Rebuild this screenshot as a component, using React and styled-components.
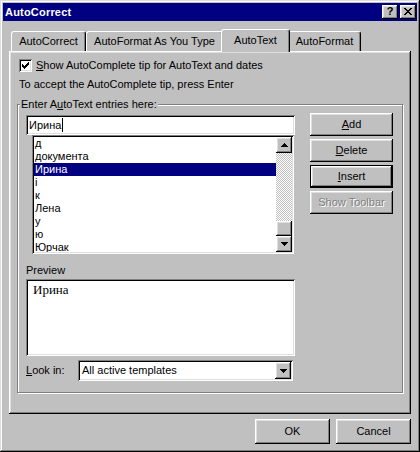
import React from "react";
import styled, { createGlobalStyle, css } from "styled-components";

const GlobalStyle = createGlobalStyle`
  html, body { margin: 0; padding: 0; background: #c0c0c0; }
  body {
    font-family: "Liberation Sans", Arial, sans-serif;
    font-size: 11px;
    color: #000;
  }
  * { box-sizing: border-box; }
  u { text-decoration: underline; text-underline-offset: 1px; }
`;

const raised = css`
  box-shadow: inset -1px -1px #000, inset 1px 1px #fff, inset -2px -2px #808080,
    inset 2px 2px #dfdfdf;
`;
const sunken = css`
  box-shadow: inset 1px 1px #808080, inset -1px -1px #fff, inset 2px 2px #000,
    inset -2px -2px #dfdfdf;
`;

const Window = styled.div`
  width: 420px;
  height: 452px;
  background: #c0c0c0;
  padding: 3px;
  display: flex;
  flex-direction: column;
  box-shadow: inset -1px -1px #000, inset 1px 1px #dfdfdf, inset -2px -2px #808080,
    inset 2px 2px #fff;
`;

const TitleBar = styled.div`
  height: 18px;
  background: #000080;
  display: flex;
  align-items: center;
  justify-content: space-between;
  padding: 0 1px 0 2px;
`;

const TitleText = styled.span`
  color: #fff;
  font-weight: bold;
  font-size: 11px;
  letter-spacing: 0.2px;
`;

const TitleButtons = styled.div`
  display: flex;
  gap: 2px;
`;

const TitleButton = styled.div`
  width: 16px;
  height: 14px;
  background: #c0c0c0;
  ${raised};
  display: flex;
  align-items: center;
  justify-content: center;
  font-weight: bold;
  font-size: 11px;
  line-height: 1;
  padding-bottom: 1px;
`;

const Body = styled.div`
  flex: 1;
  display: flex;
  flex-direction: column;
  padding: 8px 6px 5px 6px;
`;

const TabStrip = styled.div`
  height: 22px;
  display: flex;
  align-items: flex-end;
  padding-left: 2px;
  position: relative;
  z-index: 1;
`;

const Tab = styled.div`
  width: ${(p) => p.$w}px;
  height: ${(p) => (p.$active ? 23 : 20)}px;
  margin: ${(p) => (p.$active ? "0 -2px -1px -2px" : "0")};
  background: #c0c0c0;
  border-top: 1px solid #fff;
  border-left: 1px solid #fff;
  border-right: 1px solid #000;
  border-radius: 3px 3px 0 0;
  box-shadow: inset -1px 0 #808080;
  display: flex;
  align-items: flex-start;
  justify-content: center;
  padding-top: ${(p) => (p.$active ? 4 : 3)}px;
  position: relative;
  z-index: ${(p) => (p.$active ? 2 : 1)};
  white-space: nowrap;
`;

const Panel = styled.div`
  height: 363px;
  background: #c0c0c0;
  box-shadow: inset -1px -1px #000, inset 1px 1px #fff, inset -2px -2px #808080,
    inset 2px 2px #dfdfdf;
  padding: 8px 8px 0 8px;
  display: flex;
  flex-direction: column;
`;

const CheckRow = styled.div`
  display: flex;
  align-items: center;
  gap: 4px;
  height: 13px;
  margin-left: 2px;
`;

const CheckBox = styled.div`
  width: 13px;
  height: 13px;
  background: #fff;
  ${sunken};
  display: flex;
  align-items: center;
  justify-content: center;
`;

const Text = styled.span`
  line-height: 13px;
  white-space: nowrap;
  color: ${(p) => (p.$disabled ? "#808080" : "#000")};
  text-shadow: ${(p) => (p.$disabled ? "1px 1px #fff" : "none")};
`;

const InfoText = styled.div`
  line-height: 13px;
  margin: 6px 0 0 2px;
`;

const Group = styled.div`
  margin-top: 13px;
  height: 289px;
  border: 1px solid #808080;
  box-shadow: inset 1px 1px #fff, 1px 1px #fff;
  display: flex;
  flex-direction: column;
  padding: 0 9px 11px 8px;
`;

const Legend = styled.div`
  align-self: flex-start;
  margin: -7px 0 0 -6px;
  padding: 0 1px;
  background: #c0c0c0;
  line-height: 13px;
`;

const GroupGrid = styled.div`
  margin-top: 2px;
  display: grid;
  grid-template-columns: 270px 83px;
  column-gap: 14px;
  flex: 1;
`;

const LeftCol = styled.div`
  padding-top: 2px;
  display: flex;
  flex-direction: column;
`;

const RightCol = styled.div`
  display: flex;
  flex-direction: column;
  gap: 3px;
`;

const TextInput = styled.div`
  width: 269px;
  height: 20px;
  background: #fff;
  ${sunken};
  padding: 3px 3px 0 3px;
  display: flex;
  align-items: flex-start;
  line-height: 14px;
`;

const Caret = styled.span`
  width: 1px;
  height: 14px;
  background: #000;
  margin-left: 1px;
`;

const ListBox = styled.div`
  margin: 0 2px 0 6px;
  height: 119px;
  background: #fff;
  ${sunken};
  padding: 2px;
  display: flex;
`;

const ListItems = styled.div`
  flex: 1;
  display: flex;
  flex-direction: column;
  overflow: hidden;
`;

const ListItem = styled.div`
  height: 13px;
  line-height: 13px;
  padding-left: 1px;
  background: ${(p) => (p.$selected ? "#000080" : "transparent")};
  color: ${(p) => (p.$selected ? "#fff" : "#000")};
  white-space: nowrap;
`;

const ScrollBar = styled.div`
  width: 16px;
  display: flex;
  flex-direction: column;
`;

const ScrollButton = styled.div`
  width: 16px;
  height: ${(p) => p.$h || 16}px;
  background: #c0c0c0;
  ${raised};
  display: flex;
  align-items: center;
  justify-content: center;
`;

const Track = styled.div`
  flex: 1;
  background-color: #fff;
  background-image: conic-gradient(
    #c0c0c0 25%,
    #fff 0 50%,
    #c0c0c0 0 75%,
    #fff 0
  );
  background-size: 2px 2px;
`;

const FieldLabel = styled.div`
  line-height: 13px;
  margin-top: ${(p) => p.$mt || 0}px;
`;

const PreviewBox = styled.div`
  margin-top: 2px;
  width: 269px;
  height: 77px;
  background: #fff;
  ${sunken};
  padding: 3px 7px;
`;

const PreviewText = styled.div`
  font-family: "Liberation Serif", "Times New Roman", serif;
  font-size: 13px;
  line-height: 15px;
`;

const LookRow = styled.div`
  margin-top: 4px;
  display: flex;
  align-items: center;
`;

const LookLabel = styled.div`
  width: 52px;
  line-height: 13px;
`;

const Combo = styled.div`
  width: 215px;
  height: 21px;
  background: #fff;
  ${sunken};
  padding: 2px;
  display: flex;
  align-items: center;
`;

const ComboValue = styled.div`
  flex: 1;
  padding-left: 2px;
  line-height: 13px;
`;

const Button = styled.div`
  width: ${(p) => p.$w || 83}px;
  height: ${(p) => p.$h || 23}px;
  background: #c0c0c0;
  display: flex;
  align-items: center;
  justify-content: center;
  ${raised};
  ${(p) =>
    p.$default &&
    css`
      border: 1px solid #000;
    `}
`;

const Footer = styled.div`
  margin-top: 5px;
  display: flex;
  justify-content: flex-end;
  gap: 6px;
`;

const ArrowUp = () => (
  <svg width="7" height="4" viewBox="0 0 7 4">
    <path d="M3 0h1v1h1v1h1v1h1v1H0V3h1V2h1V1h1z" fill="#000" />
  </svg>
);
const ArrowDown = () => (
  <svg width="7" height="4" viewBox="0 0 7 4">
    <path d="M0 0h7v1H6v1H5v1H4v1H3V3H2V2H1V1H0z" fill="#000" />
  </svg>
);

const items = ["д", "документа", "Ирина", "і", "к", "Лена", "у", "ю", "Юрчак"];

export default function App() {
  return (
    <>
      <GlobalStyle />
      <Window>
        <TitleBar>
          <TitleText>AutoCorrect</TitleText>
          <TitleButtons>
            <TitleButton>?</TitleButton>
            <TitleButton>
              <svg width="8" height="7" viewBox="0 0 8 7">
                <path
                  d="M0 0h2v1h1v1h2V1h1V0h2v1H7v1H6v1H5v1h1v1h1v1h1v1H6V6H5V5H3v1H2v1H0V6h1V5h1V4h1V3H2V2H1V1H0z"
                  fill="#000"
                />
              </svg>
            </TitleButton>
          </TitleButtons>
        </TitleBar>
        <Body>
          <TabStrip>
            <Tab $w={75}>AutoCorrect</Tab>
            <Tab $w={137}>AutoFormat As You Type</Tab>
            <Tab $w={69} $active>
              AutoText
            </Tab>
            <Tab $w={73}>AutoFormat</Tab>
          </TabStrip>
          <Panel>
            <CheckRow>
              <CheckBox>
                <svg width="7" height="7" viewBox="0 0 7 7">
                  <path
                    d="M6 0h1v3H6v1H5v1H4v1H3v1H2V6H1V5H0V2h1v1h1v1h1V3h1V2h1V1h1z"
                    fill="#000"
                  />
                </svg>
              </CheckBox>
              <Text>
                <u>S</u>how AutoComplete tip for AutoText and dates
              </Text>
            </CheckRow>
            <InfoText>To accept the AutoComplete tip, press Enter</InfoText>
            <Group>
              <Legend>
                Enter A<u>u</u>toText entries here:
              </Legend>
              <GroupGrid>
                <LeftCol>
                  <TextInput>
                    <span>Ирина</span>
                    <Caret />
                  </TextInput>
                  <ListBox>
                    <ListItems>
                      {items.map((it) => (
                        <ListItem key={it} $selected={it === "Ирина"}>
                          {it}
                        </ListItem>
                      ))}
                    </ListItems>
                    <ScrollBar>
                      <ScrollButton>
                        <ArrowUp />
                      </ScrollButton>
                      <Track />
                      <ScrollButton $h={15} />
                      <ScrollButton>
                        <ArrowDown />
                      </ScrollButton>
                    </ScrollBar>
                  </ListBox>
                  <FieldLabel $mt={10}>Preview</FieldLabel>
                  <PreviewBox>
                    <PreviewText>Ирина</PreviewText>
                  </PreviewBox>
                  <LookRow>
                    <LookLabel>
                      <u>L</u>ook in:
                    </LookLabel>
                    <Combo>
                      <ComboValue>All active templates</ComboValue>
                      <ScrollButton $h={17}>
                        <ArrowDown />
                      </ScrollButton>
                    </Combo>
                  </LookRow>
                </LeftCol>
                <RightCol>
                  <Button>
                    <Text>
                      <u>A</u>dd
                    </Text>
                  </Button>
                  <Button>
                    <Text>
                      <u>D</u>elete
                    </Text>
                  </Button>
                  <Button $default>
                    <Text>
                      <u>I</u>nsert
                    </Text>
                  </Button>
                  <Button>
                    <Text $disabled>Show Toolbar</Text>
                  </Button>
                </RightCol>
              </GroupGrid>
            </Group>
          </Panel>
          <Footer>
            <Button $w={75} $h={25}>
              <Text>OK</Text>
            </Button>
            <Button $w={75} $h={25}>
              <Text>Cancel</Text>
            </Button>
          </Footer>
        </Body>
      </Window>
    </>
  );
}
